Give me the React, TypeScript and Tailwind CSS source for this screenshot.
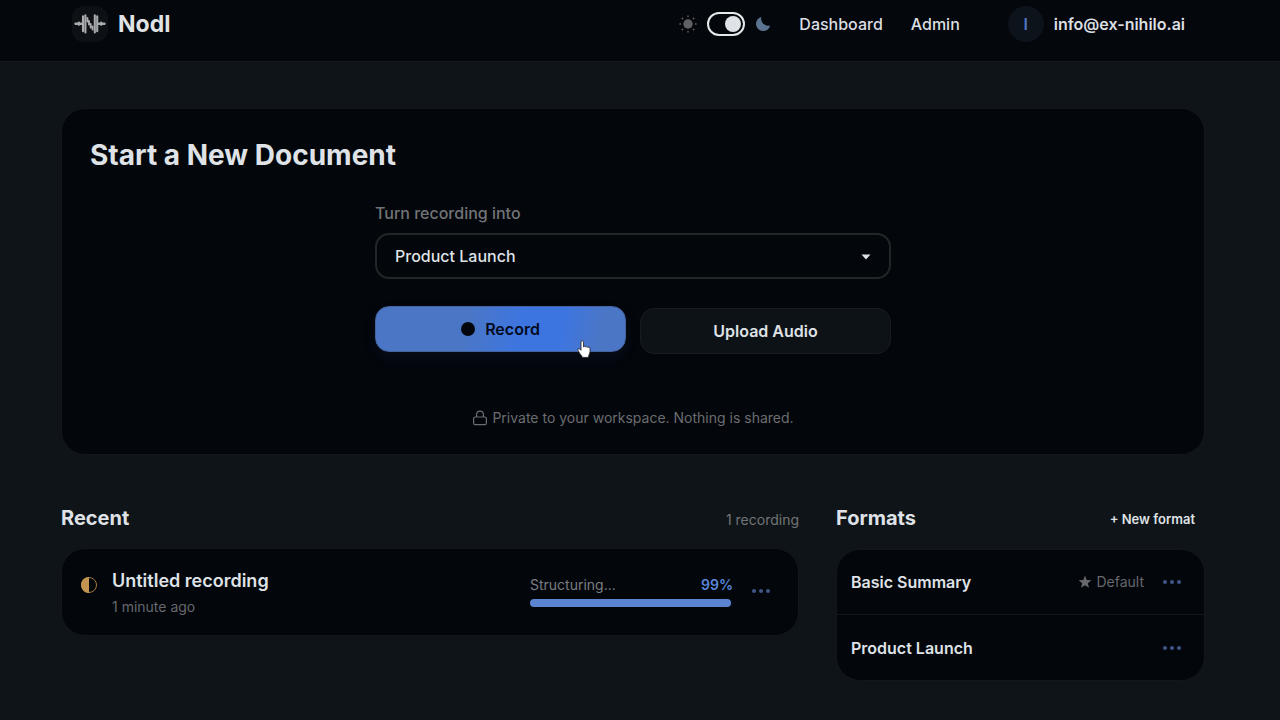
import React, { useState } from 'react';

interface Format {
    id: string;
    name: string;
    isDefault?: boolean;
}

const FORMATS: Format[] = [
    { id: 'basic-summary', name: 'Basic Summary', isDefault: true },
    { id: 'product-launch', name: 'Product Launch' },
];

const LogoIcon = () => (
    <svg width="36" height="36" viewBox="0 0 36 36" fill="none" aria-hidden="true">
        <g stroke="#a9abad" strokeLinecap="round">
            <path d="M3.5 17.700h6M26.500 17.700h6" strokeWidth="2.400" />
            <path d="M6.900 16.600v2.200M29.200 16.600v2.200" strokeWidth="2.200" />
            <path d="M11 10.300v15M13.400 9.200v17.200M22.800 9.200v17.200M25.200 10.300v15" strokeWidth="2.100" />
            <path d="M15.400 12v3.500M17 15v3.500M18.700 18v3.500M20.600 20.500v3" strokeWidth="1.900" />
        </g>
    </svg>
);

const SunIcon = () => (
    <svg width="18" height="18" viewBox="0 0 18 18" aria-hidden="true">
        <circle cx="9" cy="9" r="4.7" fill="#606163" />
        <path
            d="M9 .9v.6M9 16.5v.6M.9 9h.6M16.5 9h.6M3.2 3.2l.4.4M14.4 14.4l.4.4M3.2 14.8l.4-.4M14.4 3.6l.4-.4"
            stroke="#606163"
            strokeWidth="1.5"
            strokeLinecap="round"
        />
    </svg>
);

const MoonIcon = () => (
    <svg width="16" height="16" viewBox="0 0 16 16" aria-hidden="true">
        <path d="M6.300 .9A7.200 7.200 0 1 0 15.200 9.600A7.300 7.300 0 0 1 6.300 .9Z" fill="#5b7590" />
    </svg>
);

const LockIcon = () => (
    <svg width="16" height="16" viewBox="0 0 16 16" fill="none" stroke="#6b6d70" strokeWidth="1.2" aria-hidden="true">
        <rect x="1.6" y="7" width="12.8" height="7.6" rx="1.6" />
        <path d="M4.6 7V4.600a3.400 3.400 0 0 1 6.800 0V7" />
    </svg>
);

const StarIcon = () => (
    <svg width="14" height="14" viewBox="0 0 14 14" fill="#66686b" aria-hidden="true">
        <path d="M7 .6l1.7 4.3 4.7.3-3.6 3 1.2 4.5L7 10.2l-4 2.5 1.2-4.5-3.6-3 4.7-.3z" />
    </svg>
);

const HalfCircleIcon = () => (
    <svg width="18" height="18" viewBox="0 0 18 18" aria-hidden="true">
        <circle cx="9" cy="9" r="7.5" fill="none" stroke="#a27a42" strokeWidth="1" />
        <path d="M9 1a8 8 0 0 0 0 16z" fill="#c39550" />
    </svg>
);

const HandCursor = () => (
    <svg width="14" height="19" viewBox="0 0 14 19" aria-hidden="true">
        <path
            d="M4 2.2c0-1.9 2.5-1.9 2.5 0v4.7c.5-.9 2-.8 2.200.2.6-.8 1.900-.6 2.100.4.700-.6 2.200-.3 2.200.9v3.400c0 1.400-.9 2.400-1.200 3.600l-.3 2H5.200L5 16.400C4 15 2.200 12.800 1 10.400.4 9 1.800 8.100 2.800 9L4 10.300z"
            fill="#fff"
            stroke="#1a1a1a"
            strokeWidth=".8"
            strokeLinejoin="round"
        />
    </svg>
);

// Three-dot overflow button shared by recordings and formats.
const MoreButton = ({ label }: { label: string }) => (
    <button type="button" aria-label={label} className="flex h-8 w-8 items-center justify-center gap-[3px]">
        <span className="h-1 w-1 rounded-full bg-[#405788]" />
        <span className="h-1 w-1 rounded-full bg-[#405788]" />
        <span className="h-1 w-1 rounded-full bg-[#405788]" />
    </button>
);

const Header = ({ dark, onToggle }: { dark: boolean; onToggle: () => void }) => (
    <header className="flex h-[62px] items-start justify-between border-b border-[#14191d] bg-[#04070c] pt-[6px] pr-[95px] pl-[72px]">
        <a href="#" className="flex items-center gap-[10px]">
            <span className="rounded-xl bg-[#0d1115]">
                <LogoIcon />
            </span>
            <span className="text-[23px] leading-9 font-bold text-[#e0e3e6]">Nodl</span>
        </a>
        <nav className="flex h-9 items-center">
            <label className="mr-7 flex cursor-pointer items-center gap-[10px]">
                <SunIcon />
                <input type="checkbox" aria-label="Dark mode" checked={dark} onChange={onToggle} className="peer sr-only" />
                <span className="flex h-6 w-[38px] items-center justify-end rounded-full border-2 border-[#e6e8ea] pr-[2px]">
                    <span className="h-4 w-4 rounded-full bg-[#dfe3e7]" />
                </span>
                <MoonIcon />
            </label>
            <a href="#" className="text-base font-medium text-[#dcdfe2]">Dashboard</a>
            <a href="#" className="ml-7 text-base font-medium text-[#dcdfe2]">Admin</a>
            <a href="#" className="ml-12 flex items-center gap-[10px]">
                <span className="flex h-9 w-9 items-center justify-center rounded-full bg-[#0d131b] text-base font-semibold text-[#5077c4]">I</span>
                <span className="text-base font-semibold text-[#dcdfe2]">info@ex-nihilo.ai</span>
            </a>
        </nav>
    </header>
);

const NewDocument = () => {
    const [format, setFormat] = useState('product-launch');

    return (
        <section className="rounded-3xl border border-[#12171b] bg-[#03060b] px-7 pt-7 pb-6">
            <h1 className="text-[28px] leading-9 font-bold text-[#dfe2e6]">Start a New Document</h1>
            <div className="mx-auto mt-7 max-w-[516px]">
                <label htmlFor="format" className="block text-base leading-6 font-medium text-[#727477]">Turn recording into</label>
                <div className="relative mt-2">
                    <select
                        id="format"
                        value={format}
                        onChange={e => setFormat(e.target.value)}
                        className="h-[46px] w-full appearance-none rounded-[14px] border-2 border-[#232629] bg-[#03060b] px-[18px] text-base font-medium text-[#dfe2e6]"
                    >
                        {FORMATS.map(f => (
                            <option key={f.id} value={f.id}>{f.name}</option>
                        ))}
                    </select>
                    <svg className="pointer-events-none absolute top-[21px] right-5" width="10" height="6" viewBox="0 0 10 6" aria-hidden="true">
                        <path d="M.5.500h9L5 5.500z" fill="#dfe2e6" />
                    </svg>
                </div>
                <div className="mt-[27px] flex items-start gap-[14px]">
                    <button
                        type="button"
                        className="relative flex h-[46px] flex-1 items-center justify-center gap-[10px] rounded-[14px] border border-[#44639f] bg-[linear-gradient(100deg,#4b76c5_0%,#4b76c5_36%,#3d75e0_58%,#3d75e0_74%,#4b76c5_90%,#4b76c5_100%)] text-base font-semibold text-[#030b1e] shadow-[0_6px_14px_rgba(40,70,130,0.12)]"
                    >
                        <span className="h-[14px] w-[14px] rounded-full bg-[#03070d]" />
                        Record
                        <span className="absolute right-[34px] -bottom-2">
                            <HandCursor />
                        </span>
                    </button>
                    <button
                        type="button"
                        className="mt-[2px] h-[46px] flex-1 rounded-[14px] border border-[#181c20] bg-[#0d1216] text-base font-semibold text-[#dfe2e6]"
                    >
                        Upload Audio
                    </button>
                </div>
            </div>
            <p className="mt-[52px] flex items-center justify-center gap-1 text-sm leading-6 text-[#6b6d70]">
                <LockIcon />
                Private to your workspace. Nothing is shared.
            </p>
        </section>
    );
};

const RecentList = () => (
    <section>
        <div className="flex h-7 items-center justify-between">
            <h2 className="text-xl font-bold text-[#dfe2e6]">Recent</h2>
            <p className="pt-1 text-sm text-[#727477]">1 recording</p>
        </div>
        <article className="mt-4 flex items-start rounded-3xl border border-[#12171b] bg-[#03060b] pt-[18px] pr-[21px] pb-4 pl-[18px]">
            <span className="mt-[9px]">
                <HalfCircleIcon />
            </span>
            <div className="ml-[14px] flex-1">
                <h3 className="text-lg leading-7 font-semibold text-[#dfe2e6]">Untitled recording</h3>
                <p className="text-sm leading-6 text-[#66686b]">1 minute ago</p>
            </div>
            <div className="mt-[6px] w-[203px]">
                <div className="flex justify-between text-sm leading-6">
                    <span className="text-[#7b7d80]">Structuring...</span>
                    <span className="font-semibold text-[#5a86d8]">99%</span>
                </div>
                <div role="progressbar" aria-valuenow={99} aria-label="Structuring" className="mt-[2px] h-2 rounded-full bg-[#070d18]">
                    <div className="h-full rounded-full bg-[#5a84d2]" style={{ width: '99%' }} />
                </div>
            </div>
            <div className="mt-2 ml-3">
                <MoreButton label="Recording options" />
            </div>
        </article>
    </section>
);

const FormatList = () => (
    <section>
        <div className="flex h-7 items-center justify-between">
            <h2 className="text-xl font-bold text-[#dfe2e6]">Formats</h2>
            <button type="button" className="pt-1 pr-[10px] text-[13px] font-semibold text-[#dfe2e6]">+ New format</button>
        </div>
        <ul className="mt-[17px] divide-y divide-[#12171b] rounded-3xl border border-[#12171b] bg-[#03060b]">
            {FORMATS.map(f => (
                <li key={f.id} className="flex h-[65px] items-center pr-4 pl-[14px]">
                    <span className="flex-1 text-base font-semibold text-[#dfe2e6]">{f.name}</span>
                    {f.isDefault && (
                        <span className="mr-3 flex items-center gap-1 text-sm text-[#66686b]">
                            <StarIcon />
                            Default
                        </span>
                    )}
                    <MoreButton label={`${f.name} options`} />
                </li>
            ))}
        </ul>
    </section>
);

const App: React.FC = () => {
    const [dark, setDark] = useState(true);

    return (
        <div className="min-h-screen bg-[#0f1418] font-['Inter',sans-serif]">
            <Header dark={dark} onToggle={() => setDark(!dark)} />
            <main className="pt-[46px] pr-[75px] pb-10 pl-[61px]">
                <NewDocument />
                <div className="mt-[49px] grid grid-cols-[2fr_1fr] items-start gap-[37px]">
                    <RecentList />
                    <FormatList />
                </div>
            </main>
        </div>
    );
};

export default App;
